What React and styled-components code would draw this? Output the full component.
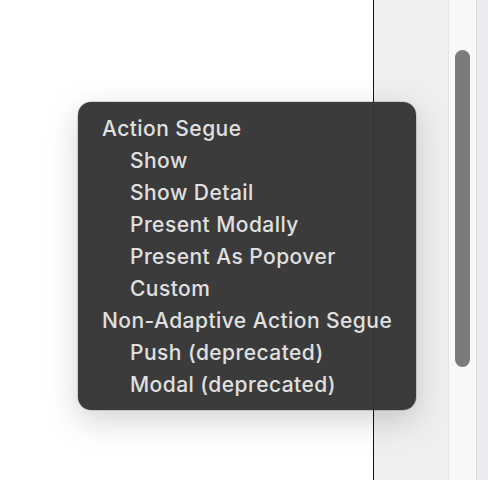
import React from 'react';
import styled, { createGlobalStyle } from 'styled-components';

const GlobalStyle = createGlobalStyle`
    html, body {
        margin: 0;
        padding: 0;
        background: #ffffff;
    }
`;

const Page = styled.div`
    position: relative;
    display: flex;
    width: 488px;
    height: 480px;
    overflow: hidden;
    font-family: Inter, "Noto Sans", sans-serif;
`;

const Canvas = styled.div`
    width: 373px;
    background: #ffffff;
`;

const Divider = styled.div`
    width: 1px;
    background: #111111;
`;

const Inspector = styled.div`
    flex: 1;
    background: #efefef;
`;

const ScrollTrack = styled.div`
    width: 27px;
    background: #f8f8f8;
    border-left: 1px solid #e4e4e4;
    border-right: 1px solid #dcdcdc;
    display: flex;
    justify-content: center;
`;

const ScrollThumb = styled.div`
    width: 15px;
    height: 317px;
    margin-top: 50px;
    border-radius: 8px;
    background: #7b7b7b;
`;

const Edge = styled.div`
    width: 11px;
    background: #ececf0;
`;

// popup menu floats over the canvas and the inspector
const Menu = styled.ul`
    position: absolute;
    left: 78px;
    top: 102px;
    width: 338px;
    margin: 0;
    padding: 11px 0 9px;
    list-style: none;
    box-sizing: border-box;
    background: rgba(53, 53, 53, 0.97);
    border-radius: 13px;
    box-shadow: 0 10px 32px rgba(0, 0, 0, 0.18), 0 0 0 0.5px rgba(0, 0, 0, 0.25);
`;

const Item = styled.li`
    height: 32px;
    line-height: 32px;
    padding-left: ${(p) => (p.$indent ? 52 : 24)}px;
    color: #e0e0e0;
    font-size: 21px;
    font-weight: 500;
    letter-spacing: 0.45px;
    white-space: nowrap;
`;

const groups = [
    {
        title: 'Action Segue',
        items: ['Show', 'Show Detail', 'Present Modally', 'Present As Popover', 'Custom'],
    },
    {
        title: 'Non-Adaptive Action Segue',
        items: ['Push (deprecated)', 'Modal (deprecated)'],
    },
];

const App = () => {
    return (
        <Page>
            <GlobalStyle />
            <Canvas />
            <Divider />
            <Inspector />
            <ScrollTrack>
                <ScrollThumb />
            </ScrollTrack>
            <Edge />
            <Menu>
                {groups.map((g) => (
                    <React.Fragment key={g.title}>
                        <Item>{g.title}</Item>
                        {g.items.map((it) => (
                            <Item key={it} $indent>{it}</Item>
                        ))}
                    </React.Fragment>
                ))}
            </Menu>
        </Page>
    );
};

export default App;
